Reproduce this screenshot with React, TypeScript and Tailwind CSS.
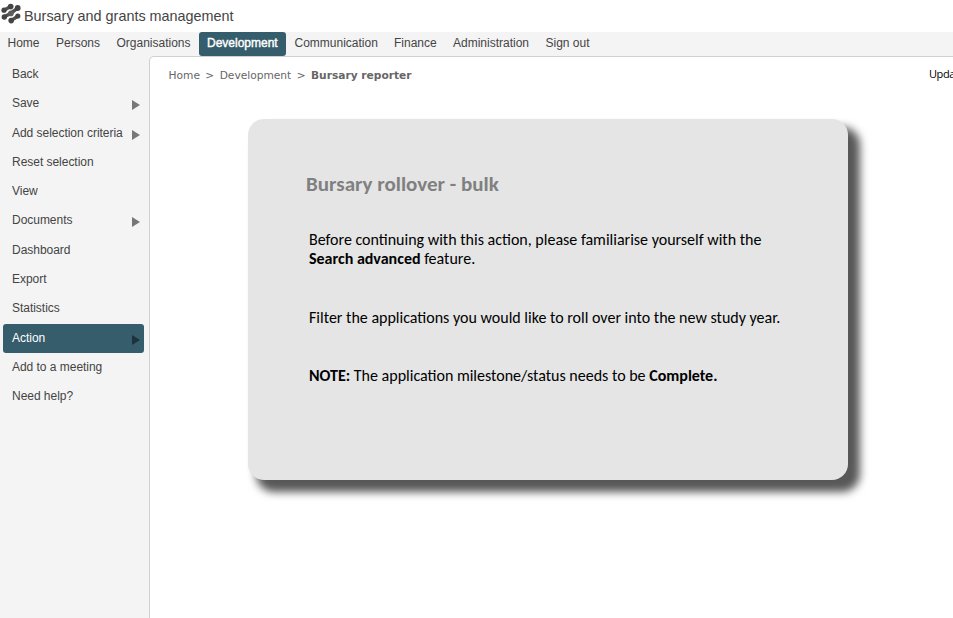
import React from "react";

const navItems = [
  { label: "Home", cell: "w-[48.5px]" },
  { label: "Persons", cell: "w-[60.5px]" },
  { label: "Organisations", cell: "w-[87px]" },
  { label: "Development", cell: "w-[87px]", active: true },
  { label: "Communication", cell: "ml-[3.5px] w-[99.5px]" },
  { label: "Finance", cell: "w-[59px]" },
  { label: "Administration", cell: "w-[92.5px]" },
  { label: "Sign out", cell: "w-[60px]" },
];

const menuItems = [
  { label: "Back" },
  { label: "Save", arrow: true },
  { label: "Add selection criteria", arrow: true },
  { label: "Reset selection" },
  { label: "View" },
  { label: "Documents", arrow: true },
  { label: "Dashboard" },
  { label: "Export" },
  { label: "Statistics" },
  { label: "Action", arrow: true, active: true },
  { label: "Add to a meeting" },
  { label: "Need help?" },
];

function Logo() {
  return (
    <svg width="22" height="26" viewBox="0 0 22 26" className="shrink-0">
      <path
        d="M4 10.2 10.6 6.6M4.4 16.8 10.9 13.2 17.6 8.2M11.3 20.4 17.8 16.2"
        fill="none"
        stroke="#505050"
        strokeWidth="3.4"
      />
      <g fill="#444">
        <circle cx="10.7" cy="6.6" r="2.8" />
        <circle cx="17.7" cy="8" r="2.9" />
        <circle cx="4" cy="10.2" r="2.6" />
        <circle cx="10.9" cy="13.4" r="2.8" fill="#5c5c5c" />
        <circle cx="4.3" cy="17" r="2.7" />
        <circle cx="17.8" cy="16" r="2.6" />
        <circle cx="11.2" cy="20.6" r="2.8" />
      </g>
    </svg>
  );
}

function TopNav() {
  return (
    <nav className="flex h-6 shrink-0 bg-[#f4f4f4] text-[12px] text-[#444]">
      <div className="flex pl-[2.5px]">
        {navItems.map((item) => (
          <div
            key={item.label}
            className={`${item.cell} flex h-6 shrink-0 items-center whitespace-nowrap pb-[2px] ${
              item.active
                ? "ml-[0.5px] rounded-[3px] bg-[#365d6b] pl-[8px] text-white [-webkit-text-stroke:0.4px_white]"
                : "pl-[5px]"
            }`}
          >
            {item.label}
          </div>
        ))}
      </div>
    </nav>
  );
}

function Sidebar() {
  return (
    <aside className="w-[149px] shrink-0 pl-[3px] pt-[4.5px]">
      {menuItems.map((item) => (
        <div
          key={item.label}
          className={`flex h-[29.27px] w-[141px] items-center justify-between rounded-[3px] pl-[9px] pr-[4px] text-[12px] ${
            item.active ? "bg-[#365d6b] text-white" : "text-[#444]"
          }`}
        >
          <span className="whitespace-nowrap pb-[2px] tracking-[-0.03px]">{item.label}</span>
          {item.arrow && (
            <svg
              width="8"
              height="10"
              viewBox="0 0 8 10"
              className={`mt-[2px] ${item.active ? "text-[#1d323a]" : "text-[#777]"}`}
            >
              <path d="M0 0 8 5 0 10Z" fill="currentColor" />
            </svg>
          )}
        </div>
      ))}
    </aside>
  );
}

export default function App() {
  return (
    <div className="flex h-[618px] w-[953px] flex-col overflow-hidden bg-white font-['Liberation_Sans',Arial,sans-serif]">
      <header className="flex h-8 shrink-0 items-start">
        <Logo />
        <h1 className="ml-[2px] whitespace-nowrap text-[14.4px] leading-8 text-[#444]">
          Bursary and grants management
        </h1>
      </header>
      <TopNav />
      <div className="flex min-h-0 flex-1 bg-[#f4f4f4]">
        <Sidebar />
        <main className="min-w-0 flex-1 rounded-tl-[5px] border-l border-t border-[#d0d0d0] bg-white">
          <div className="flex h-[36px] justify-between pl-[18.5px]">
            <div className="flex h-[37px] items-center gap-[5.4px] whitespace-nowrap font-['DejaVu_Sans',Verdana,sans-serif] text-[10.65px] text-[#666]">
              <span>Home</span>
              <span>&gt;</span>
              <span>Development</span>
              <span>&gt;</span>
              <b>Bursary reporter</b>
            </div>
            <div className="w-[24px] whitespace-nowrap pt-[9px] font-['Open_Sans',sans-serif] text-[11px] leading-4 tracking-[-0.4px] text-black">
              Upda
            </div>
          </div>
          <section className="ml-[98px] mt-[26px] h-[361px] w-[600px] rounded-[16px] bg-[#e5e5e5] pl-[58px] pt-[52px] font-[Carlito,Calibri,Lato,sans-serif] text-black shadow-[10px_10px_9px_2px_#585858]">
            <h2 className="h-[26px] whitespace-nowrap text-[21px] font-bold leading-[26px] text-[#808080]">
              Bursary rollover - bulk
            </h2>
            <div className="ml-[3px] whitespace-nowrap text-[16px] leading-[19px]">
              <p className="mt-[33px]">
                Before continuing with this action, please familiarise yourself with the
                <br />
                <b>Search advanced</b> feature.
              </p>
              <p className="mt-[40px]">Filter the applications you would like to roll over into the new study year.</p>
              <p className="mt-[39px]">
                <b>NOTE:</b> The application milestone/status needs to be <b>Complete.</b>
              </p>
            </div>
          </section>
        </main>
      </div>
    </div>
  );
}
